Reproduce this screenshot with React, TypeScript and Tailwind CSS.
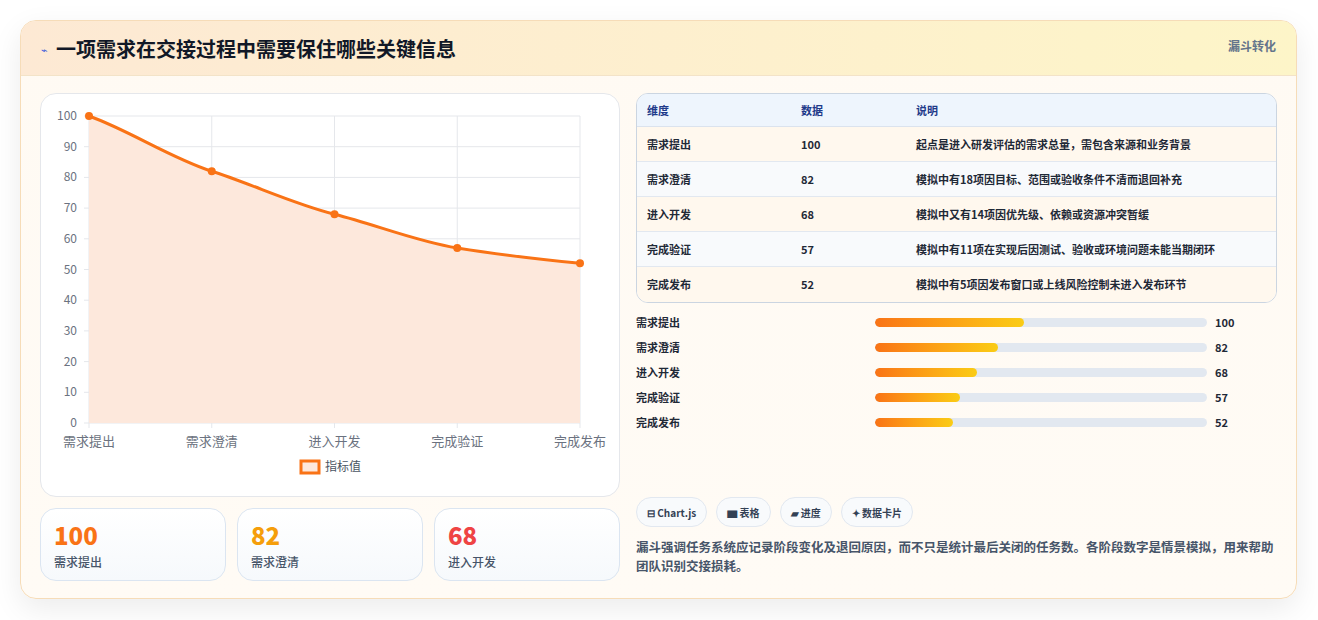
import React from "react";

const data = [
  { k: "需求提出", v: 100, d: "起点是进入研发评估的需求总量，需包含来源和业务背景" },
  { k: "需求澄清", v: 82, d: "模拟中有18项因目标、范围或验收条件不清而退回补充" },
  { k: "进入开发", v: 68, d: "模拟中又有14项因优先级、依赖或资源冲突暂缓" },
  { k: "完成验证", v: 57, d: "模拟中有11项在实现后因测试、验收或环境问题未能当期闭环" },
  { k: "完成发布", v: 52, d: "模拟中有5项因发布窗口或上线风险控制未进入发布环节" },
];

function Chart() {
  const x0 = 48, x1 = 539, yTop = 22, yBot = 329;
  const xs = data.map((_, i) => x0 + ((x1 - x0) * i) / 4);
  const ys = data.map((d) => yBot - ((yBot - yTop) * d.v) / 100);
  const pts = xs.map((x, i) => [x, ys[i]]);
  let path = `M${pts[0][0]},${pts[0][1]}`;
  for (let i = 1; i < pts.length; i++) {
    const [px, py] = pts[i - 1];
    const [cx, cy] = pts[i];
    const dx = (cx - px) / 3;
    const s0 = i > 1 ? (cy - pts[i - 2][1]) / 2 / 3 : (cy - py) / 3;
    const s1 = i < pts.length - 1 ? (pts[i + 1][1] - py) / 2 / 3 : (cy - py) / 3;
    path += ` C${px + dx},${py + s0 * 0.8} ${cx - dx},${cy - s1 * 0.8} ${cx},${cy}`;
  }
  const ticks = [0, 10, 20, 30, 40, 50, 60, 70, 80, 90, 100];
  return (
    <svg width="578" height="402" className="block">
      {ticks.map((t) => {
        const y = yBot - ((yBot - yTop) * t) / 100;
        return (
          <g key={t}>
            <line x1={x0 - 5} x2={x1} y1={y} y2={y} stroke="#e5e7eb" />
            <text x={x0 - 12} y={y + 4} textAnchor="end" fontSize="12" fill="#6b7280">{t}</text>
          </g>
        );
      })}
      {xs.map((x, i) => (
        <g key={i}>
          <line x1={x} x2={x} y1={yTop} y2={yBot + 5} stroke="#e5e7eb" />
          <text x={x} y={yBot + 23} textAnchor="middle" fontSize="13" fill="#6b7280">{data[i].k}</text>
        </g>
      ))}
      <path d={`${path} L${x1},${yBot} L${x0},${yBot} Z`} fill="#fde8dc" />
      <path d={path} fill="none" stroke="#f97316" strokeWidth="3" />
      {pts.map(([x, y], i) => (
        <circle key={i} cx={x} cy={y} r="4" fill="#f97316" />
      ))}
      <rect x="260" y="367" width="18" height="12" fill="#fde8dc" stroke="#f97316" strokeWidth="3" />
      <text x="284" y="377" fontSize="12" fill="#4b5563">指标值</text>
    </svg>
  );
}

export default function App() {
  return (
    <div className="w-[1318px] h-[620px] bg-white p-[20px]" style={{ fontFamily: '"Noto Sans CJK SC", "Noto Sans", sans-serif' }}>
      <div className="w-[1277px] h-[579px] rounded-2xl border border-[#f6dcb8] bg-gradient-to-b from-[#fffaf3] to-[#fffbf5] shadow-[0_10px_30px_rgba(0,0,0,0.08)] overflow-hidden">
        <div className="h-[55px] flex items-start justify-between px-[20px] pt-[14px] bg-gradient-to-r from-[#fde9d4] to-[#fdf5c8] border-b border-[#f3e3c8]">
          <div className="flex items-center gap-[8px]">
            <span className="text-[11px] text-[#3b5bdb]">⌁</span>
            <span className="text-[20px] font-bold text-[#111827] leading-[28px]">一项需求在交接过程中需要保住哪些关键信息</span>
          </div>
          <span className="text-[12px] font-bold text-[#64748b] mt-[2px]">漏斗转化</span>
        </div>
        <div className="flex gap-[16px] px-[19px] pt-[17px]">
          <div className="w-[581px] flex flex-col gap-[11px]">
            <div className="h-[404px] rounded-2xl border border-[#e5e7eb] bg-white">
              <Chart />
            </div>
            <div className="grid grid-cols-3 gap-[11px]">
              {[
                ["100", "需求提出", "text-[#f97316]"],
                ["82", "需求澄清", "text-[#f59e0b]"],
                ["68", "进入开发", "text-[#ef4444]"],
              ].map(([n, l, c]) => (
                <div key={l} className="h-[73px] rounded-2xl border border-[#dbe5f1] bg-gradient-to-b from-white to-[#f6f9fc] px-[13px] pt-[10px]">
                  <div className={`text-[24px] font-extrabold leading-[32px] ${c}`}>{n}</div>
                  <div className="text-[12px] font-medium text-[#475569] mt-[2px]">{l}</div>
                </div>
              ))}
            </div>
          </div>
          <div className="w-[643px] flex flex-col">
            <div className="rounded-xl border border-[#cbd5e1] overflow-hidden bg-white">
              <div className="h-[33px] flex items-center bg-[#eef5fd] text-[11px] font-bold text-[#1e3a8a] border-b border-[#dbe3ee]">
                <span className="w-[164px] pl-[10px]">维度</span>
                <span className="w-[115px]">数据</span>
                <span>说明</span>
              </div>
              {data.map((r, i) => (
                <div key={r.k} className={`h-[35px] flex items-center text-[11px] font-semibold text-[#1f2937] ${i < 4 ? "border-b border-[#e2e8f0]" : ""} ${i % 2 === 0 ? "bg-[#fff8ee]" : "bg-[#f8fafc]"}`}>
                  <span className="w-[164px] pl-[10px]">{r.k}</span>
                  <span className="w-[115px]">{r.v}</span>
                  <span>{r.d}</span>
                </div>
              ))}
            </div>
            <div className="flex flex-col gap-[7px] mt-[10px]">
              {data.map((r) => (
                <div key={r.k} className="h-[18px] flex items-center text-[11px]">
                  <span className="w-[239px] font-semibold text-[#1f2937]">{r.k}</span>
                  <div className="w-[332px] h-[9px] rounded-full bg-[#e2e8f0] overflow-hidden">
                    <div className="h-full rounded-full bg-gradient-to-r from-[#f97316] to-[#facc15]" style={{ width: `${r.v * 0.45}%` }} />
                  </div>
                  <span className="ml-[8px] font-bold text-[#1f2937]">{r.v}</span>
                </div>
              ))}
            </div>
            <div className="flex gap-[9px] mt-[66px]">
              {["⊟ Chart.js", "▆ 表格", "▰ 进度", "✦ 数据卡片"].map((c) => (
                <span key={c} className="h-[30px] px-[10px] rounded-full border border-[#e2e8f0] bg-[#f8fafc] flex items-center text-[10px] font-bold text-[#334155]">{c}</span>
              ))}
            </div>
            <p className="mt-[10px] text-[12.5px] leading-[19px] text-[#475569] font-semibold">
              漏斗强调任务系统应记录阶段变化及退回原因，而不只是统计最后关闭的任务数。各阶段数字是情景模拟，用来帮助团队识别交接损耗。
            </p>
          </div>
        </div>
      </div>
    </div>
  );
}
